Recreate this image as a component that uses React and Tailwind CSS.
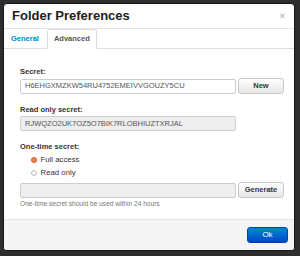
export default function App() {
  const font = { fontFamily: '"Liberation Sans", Arial, sans-serif' };
  return (
    <div className="w-[300px] h-[256px] bg-[#2e2e2e] pt-[3px] pl-[3px]" style={font}>
      <div className="w-[292px] h-[248px] bg-white rounded-[4px] border border-[#151515] flex flex-col overflow-hidden">
        {/* header */}
        <div className="h-[25px] border-b border-[#e5e5e5] flex items-center justify-between pl-[8px] pr-[9px] shrink-0">
          <div className="text-[13px] font-bold text-[#222] leading-[24px]">Folder Preferences</div>
          <div className="text-[9px] leading-none text-[#bbb] font-bold">×</div>
        </div>
        {/* tabs */}
        <div className="h-[20px] border-b border-[#ddd] flex items-end pt-[1px] shrink-0">
          <div className="h-[19px] px-[7px] flex items-center text-[7.5px] font-bold text-[#0088cc]">General</div>
          <div className="ml-[1px] h-[20px] -mb-px px-[6px] flex items-center text-[7.5px] font-bold text-[#555] bg-white border border-[#ddd] border-b-white rounded-t-[3px]">Advanced</div>
        </div>
        {/* body */}
        <div className="flex-1 pt-[18px] pl-[16px] pr-[10px] flex flex-col">
          <div className="text-[7.5px] leading-[9px] font-bold text-[#333]">Secret:</div>
          <div className="mt-[2px] flex items-center gap-[2px]">
            <div className="flex-1 h-[15px] border border-[#ccc] rounded-[2px] bg-white flex items-center pl-[4px] text-[7.5px] text-[#555]">H6EHGXMZKW54RU4752EMEIVVGOUZY5CU</div>
            <div className="w-[46px] h-[16px] border border-[#c8c8c8] rounded-[3px] bg-gradient-to-b from-white to-[#e6e6e6] flex items-center justify-center text-[7.5px] font-bold text-[#333]">New</div>
          </div>
          <div className="mt-[11px] text-[7.5px] leading-[9px] font-bold text-[#333]">Read only secret:</div>
          <div className="mt-[2px] w-[216px] h-[15px] border border-[#ccc] rounded-[2px] bg-[#eee] flex items-center pl-[4px] text-[7.5px] text-[#555]">RJWQZO2UK7OZ5O7BIK7RLOBHIUZTXRJAL</div>
          <div className="mt-[11px] text-[7.5px] leading-[9px] font-bold text-[#333]">One-time secret:</div>
          <div className="mt-[3px] ml-[11px] h-[12.5px] flex items-center gap-[3.5px] text-[7.8px] text-[#333]">
            <span className="w-[6px] h-[6px] rounded-full bg-[#e8683e] border border-[#d0572f] shadow-[inset_0_0_0_1px_#f39a78]" />
            <span>Full access</span>
          </div>
          <div className="ml-[11px] h-[12.5px] flex items-center gap-[3.5px] text-[7.8px] text-[#333]">
            <span className="w-[6px] h-[6px] rounded-full bg-white border border-[#bbb]" />
            <span>Read only</span>
          </div>
          <div className="mt-[3px] flex items-center gap-[2px]">
            <div className="flex-1 h-[15px] border border-[#ccc] rounded-[2px] bg-[#eee]" />
            <div className="w-[46px] h-[16px] border border-[#c8c8c8] rounded-[3px] bg-gradient-to-b from-white to-[#e6e6e6] flex items-center justify-center text-[7.5px] font-bold text-[#333]">Generate</div>
          </div>
          <div className="mt-[2px] text-[6.6px] leading-[8px] text-[#777]">One-time secret should be used within 24 hours</div>
        </div>
        {/* footer */}
        <div className="h-[31px] border-t border-[#e5e5e5] bg-[#f5f5f5] flex items-center justify-end pr-[6px] shrink-0">
          <div className="w-[41px] h-[16px] rounded-[3px] border border-[#0040b0] bg-gradient-to-b from-[#0088cc] to-[#0044cc] flex items-center justify-center text-[8px] text-white">Ok</div>
        </div>
      </div>
    </div>
  );
}
